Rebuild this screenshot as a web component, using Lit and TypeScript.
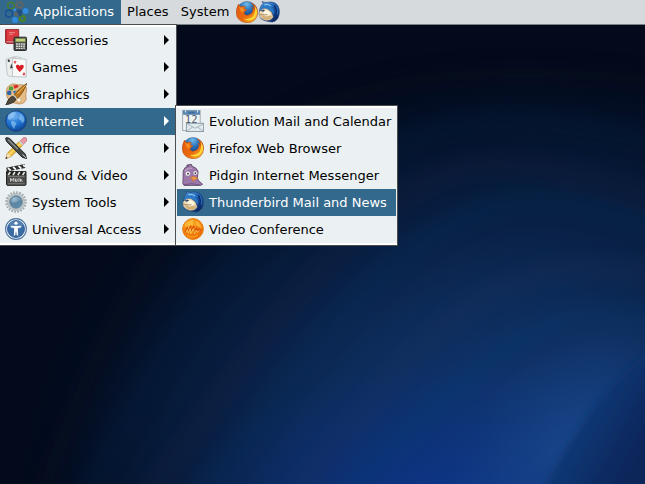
import { LitElement, html, svg, css, TemplateResult } from "lit";
import { customElement, property } from "lit/decorators.js";
import { classMap } from "lit/directives/class-map.js";

const ICONS: Record<string, () => TemplateResult> = {
  distro: () => svg`
    <g fill="none" stroke-width="1.6">
      <circle cx="6" cy="5.6" r="3.3" stroke="#467c33"/>
      <circle cx="14.4" cy="4.7" r="2.9" stroke="#5c6468" stroke-width="2.2"/>
      <circle cx="4" cy="13.5" r="3.6" stroke="#154f98"/>
      <circle cx="17.3" cy="18.5" r="2.5" stroke="#4d8227" stroke-width="2.2"/>
    </g>
    <circle cx="20.6" cy="10.9" r="2.9" fill="#318ce0"/>
    <circle cx="10" cy="19.9" r="2.9" fill="#318ce0"/>
    <circle cx="14.4" cy="12" r="2.8" fill="#244f7c"/>
    <circle cx="9.8" cy="9.7" r="1.5" fill="#318ce0"/>
    <circle cx="10.9" cy="14" r="1.9" fill="#636463"/>
    <circle cx="15.3" cy="15.2" r="1.3" fill="#244f7c"/>`,
  accessories: () => svg`
    <path d="M.6 .5H13.7V14.5H1.6L.4 13.3V1.2Z" fill="#b51720" stroke="#8f1219" stroke-width=".7"/>
    <path d="M1.6 1H13.3V11.8H1.6Z" fill="#d93c41"/>
    <path d="M1 12.3H13V13.5H1.6Z" fill="#d8a4a4"/>
    <path d="M4 3.6H10M4 5.2H8" stroke="#ee8c8c" stroke-width=".9"/>
    <rect x="9" y="8.2" width="12.5" height="13.3" rx="1" fill="#4b4e4b" stroke="#292c2a"/>
    <rect x="10.6" y="9.6" width="9.6" height="3.2" fill="#bfd27b" stroke="#798a4b" stroke-width=".5"/>
    <path d="M11 15H20M11 17.2H20M11 19.4H20" stroke="#dcdeda" stroke-width="1.4" stroke-dasharray="1.8 .6"/>
    <path d="M18.8 16V20" stroke="#9c9e99" stroke-width="1.7"/>`,
  games: () => svg`
    <path d="M1 3.3 9.6.6 15 18 5.5 20.5Q2.4 20 2.2 18Z" fill="#eceeee" stroke="#b8bfc2" stroke-width=".8"/>
    <path d="M5 2.2 12 .7 17 2" fill="none" stroke="#c4cacc"/>
    <path d="m3.8 3 1.4 2-1.2 1.2L2.4 5Z" fill="#333"/>
    <path d="M7.5 2.2 21.2 3.3V21L7.4 20.6Z" fill="#f8f8f7" stroke="#b3b9bb" stroke-width=".8"/>
    <path d="m6.3 7.3 1.4 4.6-2.6.6Z" fill="#333b3f"/>
    <path d="M14.8 16C12.8 13.7 10.9 12.4 10.9 10.5 10.9 8.4 13.4 8 14.8 9.9 16.2 8 18.8 8.5 18.8 10.6 18.8 12.4 16.4 14 14.8 16Z" fill="#dc1b23"/>
    <path d="M10 7.5 9 5.9Q9.2 4.7 10.1 5.4 11 4.7 11.1 5.9Z M19 16.6 20 18.3Q19.8 19.4 18.9 18.8 18 19.4 17.9 18.3Z" fill="#df3a3f" stroke="#df3a3f" stroke-width=".6"/>`,
  graphics: () => svg`
    <path d="M1.4 9.4C1.3 3.2 6-.1 11 1.4 14.5 2.5 17 .8 19.8 2.8 22.9 5.2 20.9 8.5 20.8 11.6 20.7 14 22 16 20 18.5 17.6 21.4 13.8 21.3 11 20.2 5.3 19.7 1.6 16.3 1.4 9.4Z" fill="#e5bd88" stroke="#b98649" stroke-width=".8"/>
    <ellipse cx="13.8" cy="17" rx="2.2" ry="1.9" fill="#fff8e9" stroke="#bf8f58" stroke-width=".5"/>
    <path d="M8.2 2.6 12.8 2 13.5 4.1 9.5 5.8Z" fill="#d52a29"/>
    <circle cx="6" cy="5.4" r="2.2" fill="#4ca13b"/>
    <circle cx="4.2" cy="9.9" r="2.3" fill="#3264ac"/>
    <path d="m7.8 8.2 3.6-.7-2 3.4Z" fill="#3b75b6"/>
    <path d="M21.8.5C18.1 3 14 6 11 9.5L9.2 12.2 12.3 15.2Q17.8 11 21.8.5Z" fill="#bd781f" stroke="#6e410f" stroke-width=".8"/>
    <path d="M20.8 2.2Q16 6.4 12.3 10.8" stroke="#f0bc62" fill="none"/>
    <path d="m9.2 12 2.9 2.9-1.6 1.6-2.8-2.8Z" fill="#d0d3d0"/>
    <path d="M8 13.2 10.9 16C10.3 19.2 6 20.8.8 21.8 2.9 18.5 3.1 14.6 8 13.2Z" fill="#50483c" stroke="#27251f" stroke-width=".8"/>`,
  internet: () => svg`
    <defs><radialGradient id="globe" cx=".4" cy=".25" r=".8"><stop stop-color="#5aa6ee"/><stop offset=".55" stop-color="#1f72cf"/><stop offset="1" stop-color="#0d3f90"/></radialGradient></defs>
    <circle cx="11" cy="11" r="10.3" fill="url(#globe)" stroke="#173f80" stroke-width="1"/>
    <path d="M3.2 5.6 6.5 2.7 10 2.1 10.8 3.6 9 5 8.3 7.7 6 8.4 5.2 10.3 2.8 8.9Z M6.3 10.8 9.5 11.5 11.4 13.4 9.9 16.2 9.2 19.1 7.1 16 6 13.2Z M14.2 3.4 17 4.6 19.2 7.7 19.3 10.4 17.6 13.6 16.2 10.9 14 9.2 14 7 15.4 5.4Z" fill="#8ac3f3" opacity=".7"/>
    <ellipse cx="9" cy="5.7" rx="6.2" ry="4.2" fill="#fff" opacity=".13"/>`,
  office: () => svg`
    <path d="M15 4.2 18 1.1Q20-.5 21.5 1.3 22.4 3 21 4.7L18 7.5Z" fill="#ec99a9" stroke="#b76c7a" stroke-width=".7"/>
    <path d="m14.3 4.5 3.6 3.4L6 19.5.8 21.5 2.4 16.2Z" fill="#f5c544" stroke="#ac7a1c" stroke-width=".8"/>
    <path d="m15.7 6.1-12 12" stroke="#ffe58e"/>
    <path d="m13.8 5 3.5 3.5 1.2-1.2L15 3.8Z" fill="#ccd1d3"/>
    <path d="m2.4 16.2 3.6 3.3-5.2 2Z" fill="#f4deb9"/><path d="m.5 22 .8-2.3 1.4 1.4Z" fill="#222"/>
    <path d="M.8.9Q2 .2 4.5 1.3L20.2 17 21.7 21.7 17 20.2 1.6 4.6Q.5 2.5.8.9Z" fill="#444947" stroke="#1e2221" stroke-width=".9"/>
    <path d="M3 2.6 12.7 12.2" stroke="#9ea4a2" stroke-width="1.1"/><path d="m17.6 17.4 3.6 3.7" stroke="#d5d6d4"/>`,
  video: () => svg`
    <path d="M1.2 3.7 19.6.1 20.2 3.9 2 7.4Z" fill="#2f3230"/>
    <path d="m3 4 2.7 2.7M8.2 2.9l2.6 2.7M13.5 1.8l2.8 2.8M18.2.8l1.7 1.8" stroke="#fff" stroke-width="1.7"/>
    <path d="M1.5 7.5H21V20.5L19.8 21.8H2.6L1.5 20.5Z" fill="#494b48" stroke="#242624"/>
    <path d="M2 8H20.5V11H2Z" fill="#242624"/><path d="m5.2 8-2 3M10 8l-2 3M14.8 8l-2 3M19.6 8l-2 3" stroke="#e6e6e3" stroke-width="1.6"/>
    <path d="M3 12.6H19.7M3 19.7H19.7" stroke="#898b87" stroke-width=".7"/>
    <path d="M5.6 17.8V14.3L7.2 16.6 8.8 14.2V17.8M10.5 14.7V17.4H12.1V14.6M14 14.2V17.8M15.6 17.8V14.8L17.4 17.6" stroke="#dedede" stroke-width=".9" fill="none"/>`,
  tools: () => svg`
    <defs><radialGradient id="hub" cx=".35" cy=".25" r=".8"><stop stop-color="#8fb2ca"/><stop offset=".5" stop-color="#5c83a0"/><stop offset="1" stop-color="#5f93b8"/></radialGradient></defs>
    <circle cx="11" cy="11" r="9.6" fill="none" stroke="#9fa8ac" stroke-width="2.4" stroke-dasharray="1.6 1.41"/>
    <circle cx="11" cy="11" r="8.5" fill="#c3cacc" stroke="#a4adb0" stroke-width=".7"/>
    <circle cx="11" cy="11" r="6.2" fill="url(#hub)" stroke="#5f7f93"/>
    <path d="M6 10.7Q10.2 12.4 16 8.5 13 4.8 9.2 6.2 6.3 7.5 6 10.7Z" fill="#b8d3e2" opacity=".3"/>`,
  access: () => svg`
    <circle cx="11" cy="11" r="10.4" fill="#eef4fa" stroke="#49739e" stroke-width="1.1"/>
    <circle cx="11" cy="11" r="8.5" fill="#396ba5" stroke="#244f86" stroke-width=".8"/>
    <ellipse cx="11" cy="7.2" rx="6.7" ry="4.2" fill="#7399c3" opacity=".5"/>
    <circle cx="11" cy="5.2" r="1.6" fill="#fff"/>
    <path d="M5.8 7.9 16.2 7.9V9.2L12.7 9.9 13.2 17.6H11.8L11 12.8 10.2 17.6H8.8L9.3 9.9 5.8 9.2Z" fill="#fff"/>`,
  evolution: () => svg`
    <rect x=".6" y=".5" width="17.6" height="20" fill="#f1f3f3" stroke="#a4acb1"/>
    <path d="M1 .5H18V4.8H1Z" fill="#5684b1"/><path d="M3.5 .6v2M15.5 .6v2" stroke="#dce6ed" stroke-width="1.2"/>
    <path d="M6.5 2.8H12.5" stroke="#355f8f" stroke-width="1.6" stroke-dasharray="1 .6"/>
    <text x="3" y="12.8" font-family="DejaVu Sans" font-size="10" letter-spacing="-.2" fill="#4b5a69">12</text>
    <rect x="4.4" y="13.3" width="17.2" height="8.2" fill="#e3eaee" stroke="#8e9ea9"/>
    <path d="m5.2 14 8 4.2 8-4.2M5.2 21l5.5-4M21 21l-5.4-4" fill="none" stroke="#9fafb8" stroke-width=".9"/>`,
  firefox: () => svg`
    <defs>
      <radialGradient id="ffglobe" cx=".48" cy=".12" r=".85"><stop stop-color="#72bbed"/><stop offset=".4" stop-color="#276fb9"/><stop offset="1" stop-color="#06205c"/></radialGradient>
      <linearGradient id="fftail" x2="1" y2="1"><stop stop-color="#e2560f"/><stop offset=".55" stop-color="#e8680f"/><stop offset="1" stop-color="#ffc928"/></linearGradient>
    </defs>
    <circle cx="11" cy="10.7" r="10.2" fill="url(#ffglobe)" stroke="#225588" stroke-width=".5"/>
    <path d="M2.4 3.1Q3.1 5.3 4.9 5.8 7 4.7 9.4 5.7L8 7.6 11 9 8.6 10.5 8 12.6Q9.9 15.4 13.6 13.6 16.8 12 17.1 8.8L15.9 6.2Q17.8 6.8 18.2 8.4 18.4 4.5 15.5 2.1 21.9 4.8 21.7 12.1 20.5 20.8 12.5 21.7 4.2 22 1 15.8-1 9.7 2.4 3.1Z" fill="url(#fftail)" stroke="#b8480c" stroke-width=".5"/>
    <path d="M18.9 5.2Q20 11.2 17.1 15.6 12.6 19.3 7.6 17.4 11.4 20.9 16.5 18.6 21.4 15.8 21.1 9.8 20.3 7 18.9 5.2Z" fill="#ffd838"/>
    <path d="M3 5 4.8 6.8Q7 6 8.6 6.5L7.2 8.1 9.5 9.3 7.2 10.5 6.1 12.3 4.2 9.2Z" fill="#f58c20"/>`,
  pidgin: () => svg`
    <path d="M2 21.4Q.2 20 1 16.7L1.2 7Q2.2 2.6 7 2 5.6 1 4.6 1.6 7.4-.2 9.7.5L9.8 2.2Q14.6 3.2 16.1 7.5L15.3 14.4 16.9 17.1 20.6 20.2 18.5 21.4Z" fill="#9b78a9" stroke="#604a6d" stroke-width=".9"/>
    <path d="M3 7Q6 3 10.3 4.5" stroke="#bba0c5" fill="none" stroke-width="1.4"/>
    <circle cx="5.8" cy="9.6" r="2.6" fill="#f7f3f7" stroke="#72557c" stroke-width=".5"/><circle cx="13.2" cy="9" r="2.3" fill="#f7f3f7" stroke="#72557c" stroke-width=".5"/>
    <circle cx="5.9" cy="9.7" r=".9" fill="#292531"/><circle cx="13.3" cy="9.1" r=".85" fill="#292531"/>
    <path d="M7.6 14.2 11.6 12.2 16.4 14.2 12.9 15.8 10.4 17.5 10.5 15Z" fill="#ef9742" stroke="#b8692d" stroke-width=".5"/>
    <path d="M2 20.8Q9.5 18.6 17.6 20.8" stroke="#74567e" fill="none"/>`,
  thunderbird: () => svg`
    <defs><linearGradient id="tbird" x1=".2" x2=".9" y2="1"><stop stop-color="#5ea6e4"/><stop offset=".35" stop-color="#2263b4"/><stop offset=".7" stop-color="#133f86"/><stop offset="1" stop-color="#081d4c"/></linearGradient></defs>
    <path d="M5.1 2.2 4 .5Q7 1.8 9 1.4 15.7-.2 19.6 4.2 23.1 10.5 19.8 17.4 17.6 20.6 14.4 21 5.6 20.4 2.4 17 .6 13 1.6 8.5 2.6 4.5 5.1 2.2Z" fill="url(#tbird)" stroke="#183d78" stroke-width=".6"/>
    <path d="M1 11.2 4.4 7.6 9 7.6 13.4 11 15.2 16Q13.3 19.6 8.6 19.6 3.6 18.6 1.4 15.2Z" fill="#ecdcbb" stroke="#8f7f64" stroke-width=".5"/>
    <path d="m1.8 13.4 5.4 2.2L14.4 14.4 12.8 17.9Q8.8 19.6 5.4 17.9Z" fill="#d3b079"/>
    <path d="m5.2 10.8 3.4-1.9 4 3.1-1.2 2-4.2.4Z" fill="#fff6df"/>
    <path d="M5.9 3.2Q11.6 1.4 15.8 6L13 5.6Q16.4 9 16 13.4 12.2 7.8 6.2 6.9L2.4 9.2Q3.1 5.3 5.9 3.2Z" fill="#2b79c6"/>
    <path d="M6.4 3.9Q10.2 2.7 12.9 4.9" fill="none" stroke="#9ad4fa" stroke-width="1.1"/>
    <path d="m2.2 9.8 3-1.2 1.9.9-2 1.3Z" fill="#3d4a66"/>
    <path d="m1.6 13 4.4 1 3.4-.6" fill="none" stroke="#8b7048" stroke-width=".7"/>
    <path d="M16.5 4.6Q20.1 9.6 17.2 17" stroke="#0d2e6c" stroke-width="1.6" fill="none"/>
    <path d="M18.4 5.6Q20.6 9.4 19.2 13.6" stroke="#2f74c2" stroke-width=".9" fill="none"/>`,
  conference: () => svg`
    <defs><radialGradient id="orange" cx=".4" cy=".3" r=".75"><stop stop-color="#ffac26"/><stop offset=".6" stop-color="#f27f0e"/><stop offset="1" stop-color="#e66707"/></radialGradient></defs>
    <circle cx="11" cy="11" r="10.4" fill="url(#orange)" stroke="#e8820d" stroke-width="1"/>
    <path d="M2.5 6.6Q7 1 12 2.4L10.6 7.5 8 8.3 5.4 13.7ZM13.5 2.4Q19.8 5.2 19.5 10.3L14 7.5Z" fill="#ffd04a" opacity=".55"/>
    <path d="M3 14.4 5.2 9.7 5.9 14 8.9 7.4 8.5 14.2 11.8 7.7 12 14.5 14.6 9.8 15.1 13.2 17 11.1 17.4 13 19.5 12" stroke="#d95207" stroke-width="1.3" fill="none"/>
    <path d="M3.6 14.5 5.4 11.6 6.2 15.2 8.3 10.5 8.7 15.6 11.4 10.6 12.4 15.8 14.4 12.1 15.6 14.4 17.6 12.2" stroke="#ffd55a" stroke-width=".8" fill="none"/>
    <path d="M5 17.3Q9.8 21.4 16 17" stroke="#ffb02a" fill="none"/>`,
};

const icon = (name: string, size = 22) =>
  html`<svg class="icon" width=${size} height=${size} viewBox=${`0 0 ${size} ${size}`} aria-hidden="true">${ICONS[name]()}</svg>`;

interface Entry { label: string; icon: string }

const CATEGORIES: Entry[] = [
  { label: "Accessories", icon: "accessories" },
  { label: "Games", icon: "games" },
  { label: "Graphics", icon: "graphics" },
  { label: "Internet", icon: "internet" },
  { label: "Office", icon: "office" },
  { label: "Sound & Video", icon: "video" },
  { label: "System Tools", icon: "tools" },
  { label: "Universal Access", icon: "access" },
];

const INTERNET: Entry[] = [
  { label: "Evolution Mail and Calendar", icon: "evolution" },
  { label: "Firefox Web Browser", icon: "firefox" },
  { label: "Pidgin Internet Messenger", icon: "pidgin" },
  { label: "Thunderbird Mail and News", icon: "thunderbird" },
  { label: "Video Conference", icon: "conference" },
];

@customElement("desktop-menu")
class DesktopMenu extends LitElement {
  @property({ attribute: false }) entries: Entry[] = [];
  @property() selected = "";
  @property({ type: Boolean }) arrows = false;

  static styles = css`
    :host { display: block; box-sizing: border-box; background: #ebf0f3; border: 1px solid #4c4d4f; padding: 2px 1px; box-shadow: inset 0 2px #fff, inset 0 -2px #fff; }
    .row { display: flex; align-items: center; height: 27px; box-sizing: border-box; padding: 0 5px 1px; color: #000; white-space: nowrap; }
    .row.on { background: #33698d; color: #fff; }
    .icon { flex: none; display: block; margin-right: 5px; }
    .label { flex: 1; line-height: 27px; padding-top: 1px; }
    .arrow { flex: none; width: 5px; height: 10px; margin-right: 1px; fill: currentColor; }
  `;

  render() {
    return this.entries.map((e) => html`
      <div class=${classMap({ row: true, on: e.label === this.selected })}>
        ${icon(e.icon)}<span class="label">${e.label}</span>
        ${this.arrows ? html`<svg class="arrow" viewBox="0 0 5 10"><path d="M0 0 5 5 0 10Z"/></svg>` : ""}
      </div>`);
  }
}

@customElement("app-root")
class AppRoot extends LitElement {
  static styles = css`
    :host { display: block; position: relative; width: 645px; height: 484px; overflow: hidden; background: #010a1c; font: 13px "DejaVu Sans", sans-serif; color: #000; }
    .wallpaper { position: absolute; inset: 0; display: block; }
    .panel { position: relative; display: flex; align-items: center; box-sizing: border-box; height: 25px; background: #d6dadc; border-bottom: 1px solid #7b8287; }
    .title { height: 24px; line-height: 24px; display: flex; align-items: center; padding: 0 6px; letter-spacing: .06px; }
    .title.open { width: 121px; box-sizing: border-box; padding: 0 0 0 5px; background: #33698d; color: #fff; }
    .title.open .icon { margin-right: 5px; }
    .launchers { display: flex; }
    .icon { display: block; flex: none; }
    .categories { position: absolute; left: 0; top: 24px; width: 177px; height: 222px; border-left: 0; padding-left: 0; }
    .submenu { position: absolute; left: 175px; top: 105px; width: 223px; height: 141px; }
  `;

  render() {
    return html`
      <svg class="wallpaper" width="645" height="484" viewBox="0 0 645 484">
        <defs>
          <radialGradient id="glow" gradientUnits="userSpaceOnUse" cx="0" cy="0" r="1" gradientTransform="translate(510 500) rotate(-12) scale(490 440)">
            <stop offset="0" stop-color="#0e3a80"/><stop offset=".25" stop-color="#10346c"/><stop offset=".45" stop-color="#0d2c5a"/><stop offset=".6" stop-color="#0a2248"/><stop offset=".75" stop-color="#061a38"/><stop offset=".88" stop-color="#041026"/><stop offset="1" stop-color="#020a1c"/>
          </radialGradient>
          <radialGradient id="royal" gradientUnits="userSpaceOnUse" cx="0" cy="0" r="1" gradientTransform="translate(430 520) scale(250 160)">
            <stop offset="0" stop-color="#0c3496" stop-opacity=".7"/><stop offset=".5" stop-color="#0c3088" stop-opacity=".38"/><stop offset="1" stop-color="#0c2f80" stop-opacity="0"/>
          </radialGradient>
          <radialGradient id="beam" gradientUnits="userSpaceOnUse" cx="0" cy="0" r="1" gradientTransform="translate(565 445) rotate(-48) scale(160 90)">
            <stop stop-color="#1a488c" stop-opacity=".8"/><stop offset=".5" stop-color="#184488" stop-opacity=".45"/><stop offset="1" stop-color="#164080" stop-opacity="0"/>
          </radialGradient>
          <linearGradient id="fold" x1="580" y1="410" x2="645" y2="445" gradientUnits="userSpaceOnUse">
            <stop stop-color="#133a78"/><stop offset=".6" stop-color="#0b2d65"/><stop offset="1" stop-color="#07265a"/>
          </linearGradient>
          <filter id="soft" x="-20%" y="-20%" width="140%" height="140%"><feGaussianBlur stdDeviation="9"/></filter>
          <filter id="edge"><feGaussianBlur stdDeviation="3"/></filter>
        </defs>
        <rect width="645" height="484" fill="url(#glow)"/>
        <rect width="645" height="484" fill="url(#royal)"/>
        <g filter="url(#soft)" fill="none" stroke-width="14" opacity=".28">
          <path d="M40 500C100 330 150 250 220 170S440 55 660 82" stroke="#150a18"/>
          <path d="M85 500C160 350 220 250 330 180S500 110 660 140" stroke="#04204a"/>
          <path d="M145 500C240 370 300 270 390 205S540 165 660 200" stroke="#221a3c"/>
          <path d="M200 500C280 400 330 310 420 245S560 200 660 225" stroke="#053060"/>
          <path d="M290 500C350 430 410 340 480 300S580 265 660 275" stroke="#22305c"/>
          <path d="M340 500C410 430 470 365 530 335S610 320 660 318" stroke="#063c74"/>
        </g>
        <rect width="645" height="484" fill="url(#beam)"/>
        <path d="M665 336C605 385 575 425 537 500H665Z" fill="url(#fold)" filter="url(#edge)"/>
      </svg>
      <div class="panel">
        <div class="title open">${icon("distro", 24)}<span>Applications</span></div>
        <div class="title">Places</div>
        <div class="title">System</div>
        <div class="launchers">${icon("firefox")}${icon("thunderbird")}</div>
      </div>
      <desktop-menu class="categories" .entries=${CATEGORIES} selected="Internet" arrows></desktop-menu>
      <desktop-menu class="submenu" .entries=${INTERNET} selected="Thunderbird Mail and News"></desktop-menu>
    `;
  }
}
